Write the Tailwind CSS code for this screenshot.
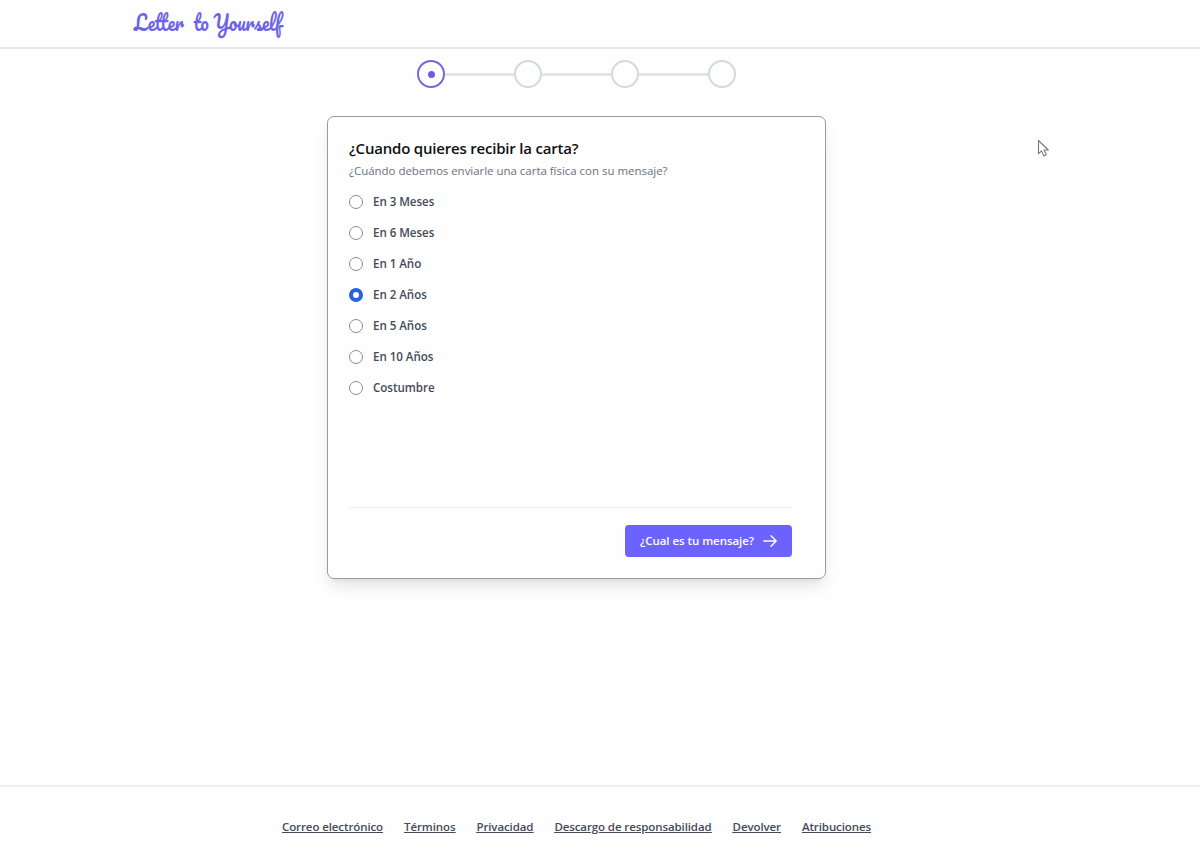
<!DOCTYPE html>
<html lang="es">

<head>
    <meta charset="UTF-8" />
    <meta name="viewport" content="width=device-width, initial-scale=1.0" />
    <title>Letter to Yourself</title>
    <script src="https://cdn.jsdelivr.net/npm/@tailwindcss/browser@4"></script>
</head>

<body class="relative flex h-[849px] flex-col overflow-hidden bg-[#fefefe] font-['Segoe_UI','Open_Sans',sans-serif] text-[#434b59]">
    <!-- Cabecera -->
    <header class="h-[49px] shrink-0 border-b-2 border-[#e8e8ea] pl-[134px] pt-[5px]">
        <a class="block w-fit origin-left scale-x-[.865] whitespace-nowrap font-['Pacifico',cursive] text-[21px] leading-[36px] text-[#6c63e8]">Letter&nbsp; to Yourself</a>
    </header>

    <main class="flex w-[1153px] grow flex-col items-center">
        <!-- Pasos -->
        <nav class="mt-[11px] flex items-center">
            <span class="flex size-7 items-center justify-center rounded-full border-2 border-[#7468d8]">
                <span class="size-[7px] rounded-full bg-[#6c5ce0]"></span>
            </span>
            <span class="h-[3px] w-[69px] bg-[#e3e4e6]"></span>
            <span class="size-7 rounded-full border-2 border-[#d6d9dc]"></span>
            <span class="h-[3px] w-[69px] bg-[#e3e4e6]"></span>
            <span class="size-7 rounded-full border-2 border-[#d6d9dc]"></span>
            <span class="h-[3px] w-[69px] bg-[#e3e4e6]"></span>
            <span class="size-7 rounded-full border-2 border-[#d6d9dc]"></span>
        </nav>

        <!-- Tarjeta -->
        <form class="mt-[28px] flex h-[463px] w-[499px] flex-col rounded-[7px] border border-[#9a9c9f] pl-[21px] pr-[33px] pt-[20px] shadow-lg">
            <h1 class="whitespace-nowrap text-[15px] font-semibold leading-[22px] tracking-[-0.2px] text-[#111]">¿Cuando quieres recibir la carta?</h1>
            <p class="mt-px whitespace-nowrap text-[11.5px] leading-[22px] tracking-[-0.03px] text-[#6b7280]">¿Cuándo debemos enviarle una carta física con su mensaje?</p>
            <div class="mt-[9.5px] flex flex-col gap-[11.15px] text-[11.6px] font-semibold leading-[20px] tracking-[-0.05px]">
                <label class="flex items-center gap-[10px]"><span class="size-[14px] rounded-full border border-[#8b8d91]"></span>En 3 Meses</label>
                <label class="flex items-center gap-[10px]"><span class="size-[14px] rounded-full border border-[#8b8d91]"></span>En 6 Meses</label>
                <label class="flex items-center gap-[10px]"><span class="size-[14px] rounded-full border border-[#8b8d91]"></span>En 1 Año</label>
                <label class="flex items-center gap-[10px]"><span class="size-[14px] rounded-full border-[4.5px] border-[#2563e0] bg-white"></span>En 2 Años</label>
                <label class="flex items-center gap-[10px]"><span class="size-[14px] rounded-full border border-[#8b8d91]"></span>En 5 Años</label>
                <label class="flex items-center gap-[10px]"><span class="size-[14px] rounded-full border border-[#8b8d91]"></span>En 10 Años</label>
                <label class="flex items-center gap-[10px]"><span class="size-[14px] rounded-full border border-[#8b8d91]"></span>Costumbre</label>
            </div>
            <div class="mb-[21px] mt-auto flex justify-end border-t border-[#efeff1] pt-[17px]">
                <button type="button" class="flex h-[32px] w-[167px] items-center justify-between rounded-[4px] bg-[#6c63ff] pl-[15px] pr-[15px] text-[11.5px] font-semibold tracking-[-0.05px] text-white">
                    <span class="whitespace-nowrap">¿Cual es tu mensaje?</span>
                    <svg class="h-[14px] w-[14px]" viewBox="0 0 14 14" fill="none" stroke="currentColor" stroke-width="1.4" stroke-linecap="round" stroke-linejoin="round">
                        <path d="M.8 7h12.4M8 1.8 13.2 7 8 12.2" />
                    </svg>
                </button>
            </div>
        </form>
    </main>

    <!-- Pie -->
    <footer class="h-[64px] shrink-0 border-t-2 border-[#eeeff0] pt-[30px]">
        <div class="flex w-[1153px] justify-center gap-[21px] whitespace-nowrap text-[11.5px] font-semibold leading-[20px] tracking-[-0.1px] underline">
            <a>Correo electrónico</a>
            <a>Términos</a>
            <a>Privacidad</a>
            <a>Descargo de responsabilidad</a>
            <a>Devolver</a>
            <a>Atribuciones</a>
        </div>
    </footer>

    <!-- Cursor -->
    <svg class="absolute left-[1037px] top-[139px]" width="14" height="19" viewBox="0 0 14 19" fill="#fff" stroke="#77787a" stroke-width="1.1" stroke-linejoin="round">
        <path d="M1.5 1.5v13.2l3.1-2.8 2.2 5 2.5-1.1-2.2-4.8h4.2z" />
    </svg>
</body>

</html>
